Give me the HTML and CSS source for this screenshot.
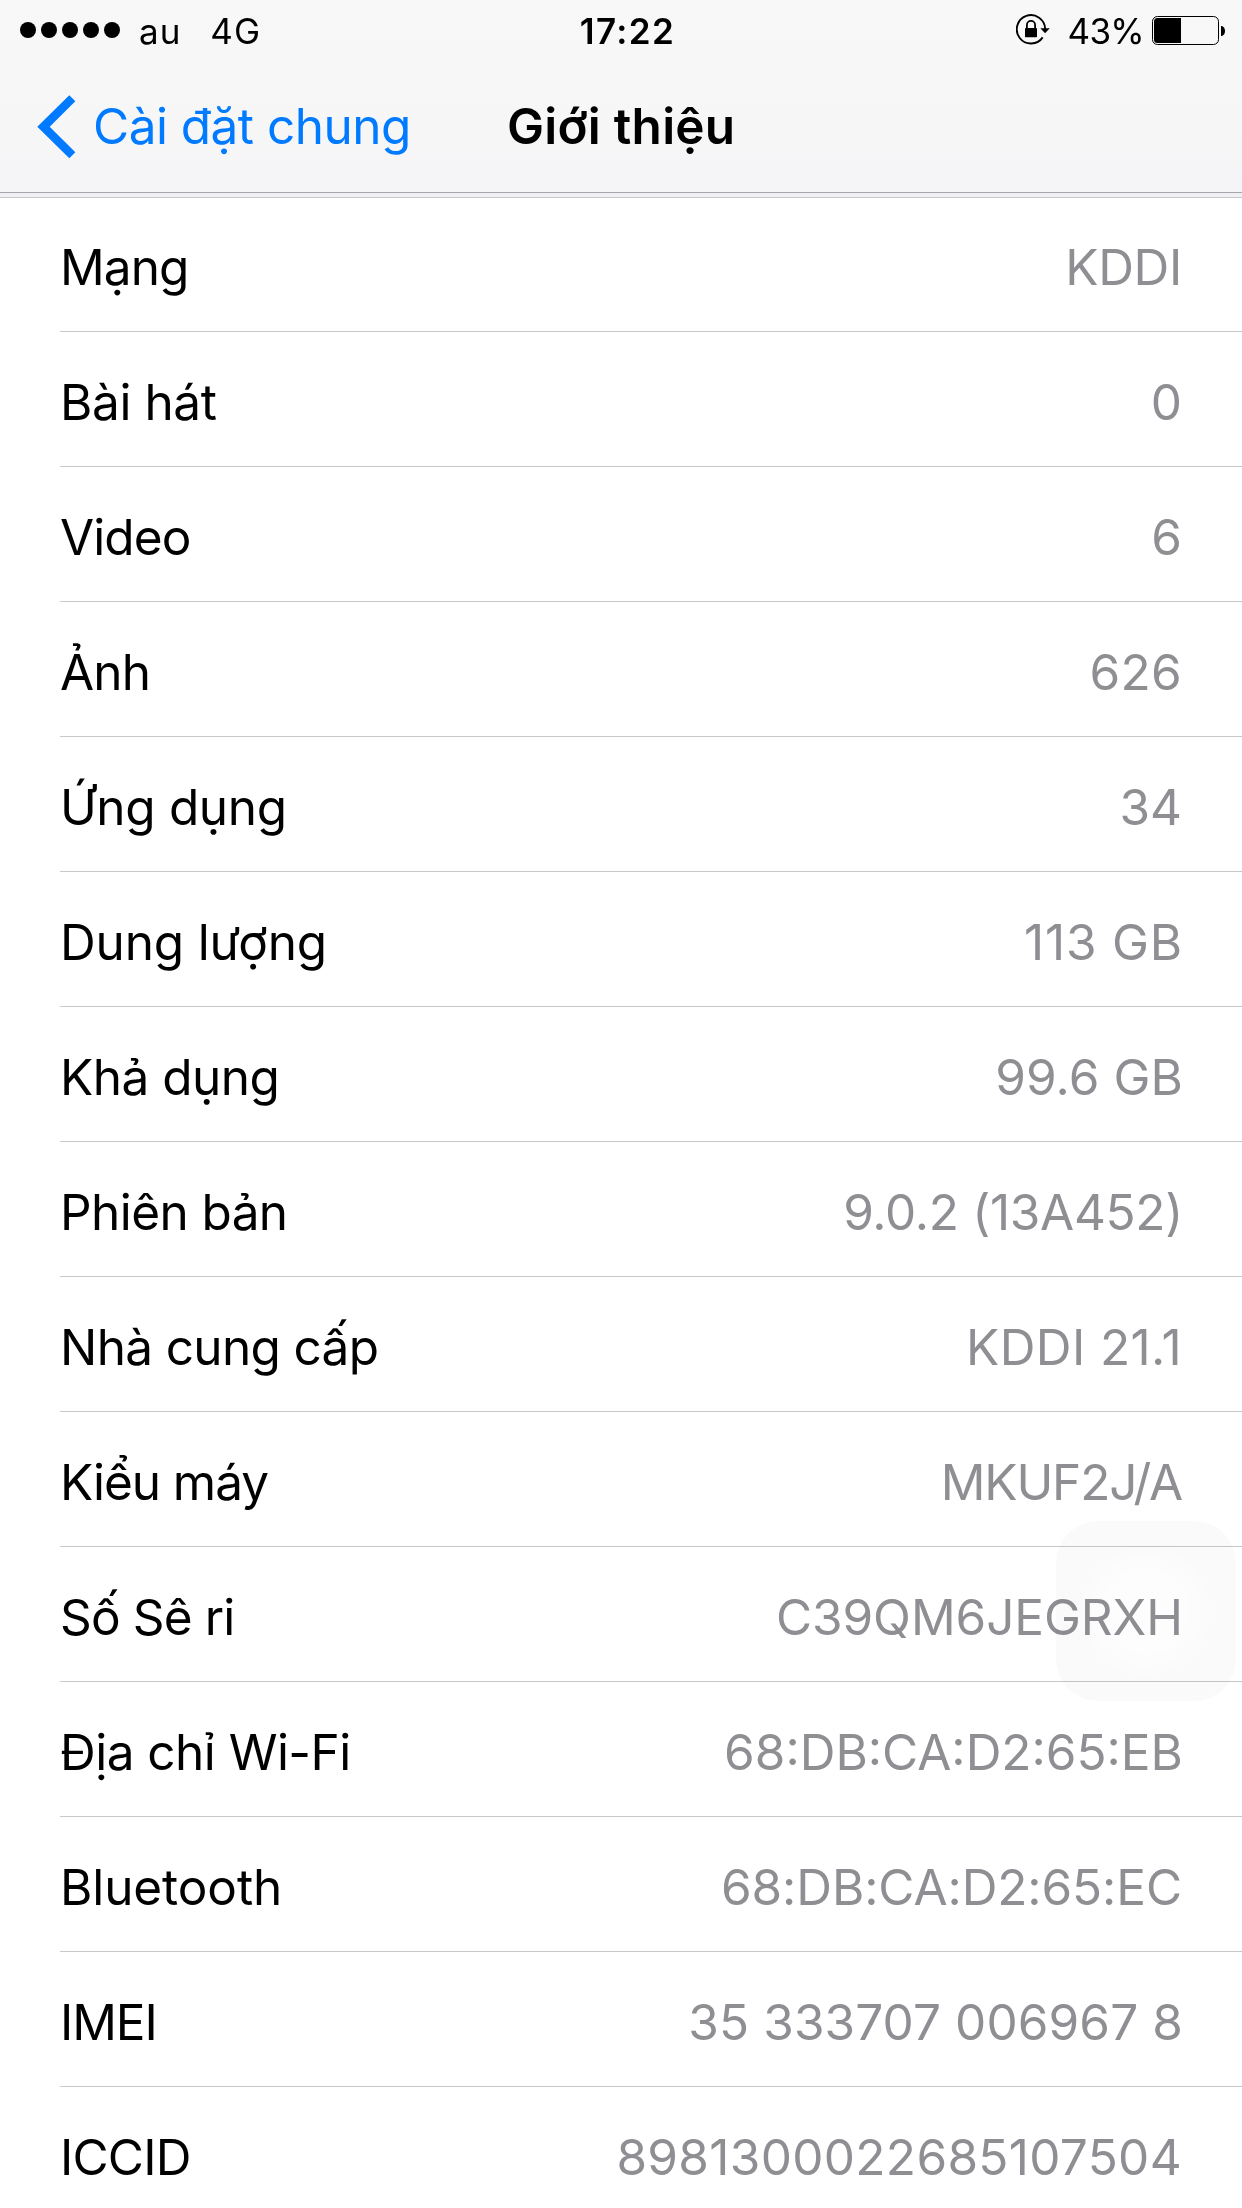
FILE: index.html
```
<!DOCTYPE html>
<html lang="vi">
<head>
<meta charset="utf-8">
<title>Giới thiệu</title>
<link rel="stylesheet" href="styles.css">
</head>
<body>
<header class="top">
  <div class="status">
    <div class="status-left">
      <svg class="signal" width="100" height="16" viewBox="0 0 100 16"><circle cx="8" cy="8" r="8"/><circle cx="29" cy="8" r="8"/><circle cx="50" cy="8" r="8"/><circle cx="71" cy="8" r="8"/><circle cx="92" cy="8" r="8"/></svg>
      <span class="carrier">au</span>
      <span class="network">4G</span>
    </div>
    <span class="clock">17:22</span>
    <div class="status-right">
      <svg class="lock" width="34" height="32" viewBox="0 0 34 32">
        <path d="M26.7 23.4A14.2 14.2 0 1 1 29.2 15" fill="none" stroke="#000" stroke-width="1.9"/>
        <path d="M24.3 14.3h9.5l-4.7 5z"/>
        <rect x="9" y="14" width="12" height="9.3" rx=".8"/>
        <path d="M10.9 14.5V11a4.1 4.1 0 0 1 8.2 0v3.5" fill="none" stroke="#000" stroke-width="1.8"/>
      </svg>
      <span class="percent">43%</span>
      <svg class="battery" width="74" height="30" viewBox="0 0 74 30">
        <rect x=".5" y=".5" width="66" height="28" rx="5" fill="none" stroke="#000"/>
        <path d="M29 2v25H5.500a3.500 3.500 0 0 1-3.500-3.500V5.500a3.500 3.500 0 0 1 3.500-3.500z"/>
        <path d="M69 10c5.300 0 5.300 10 0 10z"/>
      </svg>
    </div>
  </div>
  <nav class="nav">
    <a class="back"><svg width="39" height="64" viewBox="0 0 39 64"><path d="M32.300 .3L38.300 6.300L12.700 31.800L38.300 57.300L32.300 63.300L.3 31.800z" fill="#007aff"/></svg><span>Cài đặt chung</span></a>
    <h1>Giới thiệu</h1>
  </nav>
</header>
<main class="list">
  <div class="row mang"><span>Mạng</span><b>KDDI</b></div>
  <div class="row bai"><span>Bài hát</span><b>0</b></div>
  <div class="row video"><span>Video</span><b>6</b></div>
  <div class="row anh"><span>Ảnh</span><b>626</b></div>
  <div class="row apps"><span>Ứng dụng</span><b>34</b></div>
  <div class="row capacity"><span>Dung lượng</span><b>113 GB</b></div>
  <div class="row free"><span>Khả dụng</span><b>99.6 GB</b></div>
  <div class="row version"><span>Phiên bản</span><b>9.0.2 (13A452)</b></div>
  <div class="row provider"><span>Nhà cung cấp</span><b>KDDI 21.1</b></div>
  <div class="row model"><span>Kiểu máy</span><b>MKUF2J/A</b></div>
  <div class="row serial"><span>Số Sê ri</span><b>C39QM6JEGRXH</b></div>
  <div class="row wifi"><span>Địa chỉ Wi-Fi</span><b>68:DB:CA:D2:65:EB</b></div>
  <div class="row bt"><span>Bluetooth</span><b>68:DB:CA:D2:65:EC</b></div>
  <div class="row imei"><span>IMEI</span><b>35 333707 006967 8</b></div>
  <div class="row iccid"><span>ICCID</span><b>8981300022685107504</b></div>
</main>
<div class="touch"></div>
</body>
</html>
```

FILE: styles.css
```
* { box-sizing: border-box; }
body {
  margin: 0;
  height: 2208px;
  overflow: hidden;
  background: #fff;
  color: #000;
  font: 49.5px/60px Inter, "Liberation Sans", sans-serif;
}
svg { display: block; flex: none; }

.top {
  height: 193px;
  border-bottom: 1px solid #a7a7ab;
  background: linear-gradient(#f8f8f8, #f6f6f7 75%, #f5f5f8);
}
.status {
  height: 60px;
  padding: 2px 16px 0 20px;
  display: grid;
  grid-template-columns: 1fr auto 1fr;
  align-items: center;
  font-size: 35px;
  line-height: 42px;
}
.status-left, .status-right { display: flex; align-items: center; }
.status-right { justify-content: flex-end; }
.signal { margin-top: -2px; }
.carrier { margin-left: 19px; letter-spacing: 1px; }
.network { margin-left: 29px; letter-spacing: 1px; }
.clock { font-weight: 600; letter-spacing: 1.4px; padding-left: 9px; }
.lock { margin-top: -2px; }
.percent { margin-left: 18px; letter-spacing: -.7px; }
.battery { margin-left: 8px; }

.nav {
  height: 132px;
  padding: 0 37px;
  display: grid;
  grid-template-columns: 470px auto;
  align-items: center;
}
.back { display: flex; align-items: center; color: #007aff; letter-spacing: -.52px; }
.back svg { margin-top: 1px; }
.back span { margin-left: 17px; }
h1 { margin: 0; font-size: 49.5px; line-height: 60px; font-weight: 600; letter-spacing: .25px; }

.list {
  margin-top: 4px;
  padding-left: 60px;
  border-top: 1px solid #c8c7cc;
  box-shadow: 0 -4px #efeff4;
}
.row {
  height: 135px;
  padding: 6px 60px 0 0;
  border-bottom: 1px solid #c8c7cc;
  display: flex;
  justify-content: space-between;
  align-items: center;
  white-space: nowrap;
}
.row:first-child { height: 134px; padding-top: 5px; }
.row b { font-weight: 400; color: #8e8e93; }

/* Tracking for each label and value */
.mang span { letter-spacing: -.9px; }
.mang b { letter-spacing: -.3px; }
.bai span { letter-spacing: -.4px; }
.video span { letter-spacing: -.9px; }
.anh span { letter-spacing: -.8px; }
.anh b { letter-spacing: .3px; }
.apps span { letter-spacing: -.33px; }
.capacity span { letter-spacing: -.17px; }
.capacity b { letter-spacing: .8px; margin-right: -1px; }
.free span { letter-spacing: -.5px; }
.free b { letter-spacing: .1px; margin-right: -1px; }
.version span { letter-spacing: -.58px; }
.version b { letter-spacing: -.3px; margin-right: -1px; }
.provider span { letter-spacing: -.65px; }
.provider b { letter-spacing: .4px; }
.model span { letter-spacing: -1.04px; }
.model b { letter-spacing: -1.15px; }
.serial span { letter-spacing: -.85px; }
.serial b { letter-spacing: -.08px; margin-right: -1px; }
.wifi span { letter-spacing: -.53px; }
.wifi b { margin-right: -1px; }
.bt span { letter-spacing: -.1px; }
.bt b { letter-spacing: -.1px; }
.imei span { letter-spacing: -1.07px; }
.imei b { letter-spacing: .1px; margin-right: -1px; }
.iccid span { letter-spacing: -.8px; }
.iccid b { letter-spacing: .33px; }

/* Floating touch button over the list */
.touch {
  position: absolute;
  left: 1056px;
  top: 1521px;
  width: 180px;
  height: 180px;
  border-radius: 42px;
  mix-blend-mode: multiply;
  background: radial-gradient(circle, #fdfdfd 43px, #fcfcfc 44px 55px, #fbfbfb 56px 63px, #fafafa 64px);
}
```
